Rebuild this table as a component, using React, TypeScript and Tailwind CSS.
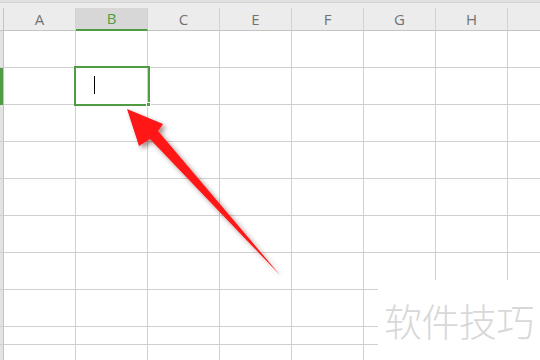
import React from "react";

const cols = ["A", "B", "C", "E", "F", "G", "H"];
const rowHeights = [37, 37, 37, 37, 37, 37, 37, 37, 18, 20];

function HeaderCell({ label, active }: { label: string; active?: boolean }) {
  if (active) {
    return (
      <div className="w-[72px] h-[23px] shrink-0 border-r border-[#cfcfcf] border-b-2 border-b-[#4f9c45] bg-[#d7d7d7] flex items-center justify-center text-[15px] font-normal text-[#4f9c45]">
        {label}
      </div>
    );
  }
  return (
    <div className="w-[72px] h-[23px] shrink-0 border-r border-[#d2d2d2] border-b border-b-[#c4c4c4] flex items-center justify-center text-[15px] font-normal text-[#727272]">
      {label}
    </div>
  );
}

function SelectedCell() {
  return (
    <div className="relative w-[72px] h-full shrink-0 border-r border-b border-[#d0d0d0]">
      <div className="absolute left-[-2px] top-[-2px] w-[76px] h-[40px] border-2 border-[#4f9c45] z-10" />
      <div className="absolute left-[70px] top-[34px] w-[5px] h-[5px] bg-[#4f9c45] border border-white z-20" />
      <div className="absolute left-[18px] top-[8px] w-[1px] h-[18px] bg-black z-10" />
    </div>
  );
}

export default function App() {
  return (
    <div className="relative w-[540px] h-[360px] overflow-hidden bg-white font-['Open_Sans',sans-serif]">
      {/* top strip */}
      <div className="h-[8px] bg-[#ececec] flex flex-col">
        <div className="h-[2px] bg-[#e0e0e0]" />
        <div className="h-[1px] bg-[#d3d3d3]" />
      </div>
      {/* column header */}
      <div className="flex h-[23px] bg-[#ececec]">
        <div className="w-[4px] shrink-0 h-[23px] border-r border-[#c4c4c4] border-b border-b-[#c4c4c4]" />
        {cols.map((c) => (
          <HeaderCell key={c} label={c} active={c === "B"} />
        ))}
        <div className="flex-1 h-[23px] border-b border-[#c4c4c4]" />
      </div>
      {/* rows */}
      {rowHeights.map((h, r) => (
        <div key={r} className="flex" style={{ height: h }}>
          <div
            className={
              r === 1
                ? "w-[4px] shrink-0 h-full bg-[#4f9c45] border-r border-[#c4c4c4]"
                : "w-[4px] shrink-0 h-full bg-[#e3e3e3] border-r border-[#c4c4c4] border-b border-b-[#d0d0d0]"
            }
          />
          {cols.map((c) =>
            r === 1 && c === "B" ? (
              <SelectedCell key={c} />
            ) : (
              <div key={c} className="w-[72px] h-full shrink-0 border-r border-b border-[#d0d0d0]" />
            )
          )}
          <div className="flex-1 h-full border-b border-[#d0d0d0]" />
        </div>
      ))}

      {/* arrow */}
      <svg className="absolute left-0 top-0 pointer-events-none z-30" width="540" height="360" viewBox="0 0 540 360">
        <defs>
          <filter id="sh" x="-20%" y="-20%" width="140%" height="140%">
            <feDropShadow dx="3" dy="3" stdDeviation="2.5" floodColor="#3a0000" floodOpacity="0.45" />
          </filter>
        </defs>
        <polygon
          points="127,109 163,124 158,131 280,275 150,139 139,146"
          fill="#ff1414"
          filter="url(#sh)"
        />
      </svg>

      {/* watermark */}
      <div className="absolute left-[378px] top-[280px] w-[162px] h-[80px] bg-white z-40 flex items-center">
        <span className="ml-[6px] mt-[-1px] text-[38px] leading-none tracking-[-0.5px] text-[#d8d8d8] font-['Noto_Sans_CJK_SC',sans-serif] font-light">
          软件技巧
        </span>
      </div>
    </div>
  );
}
